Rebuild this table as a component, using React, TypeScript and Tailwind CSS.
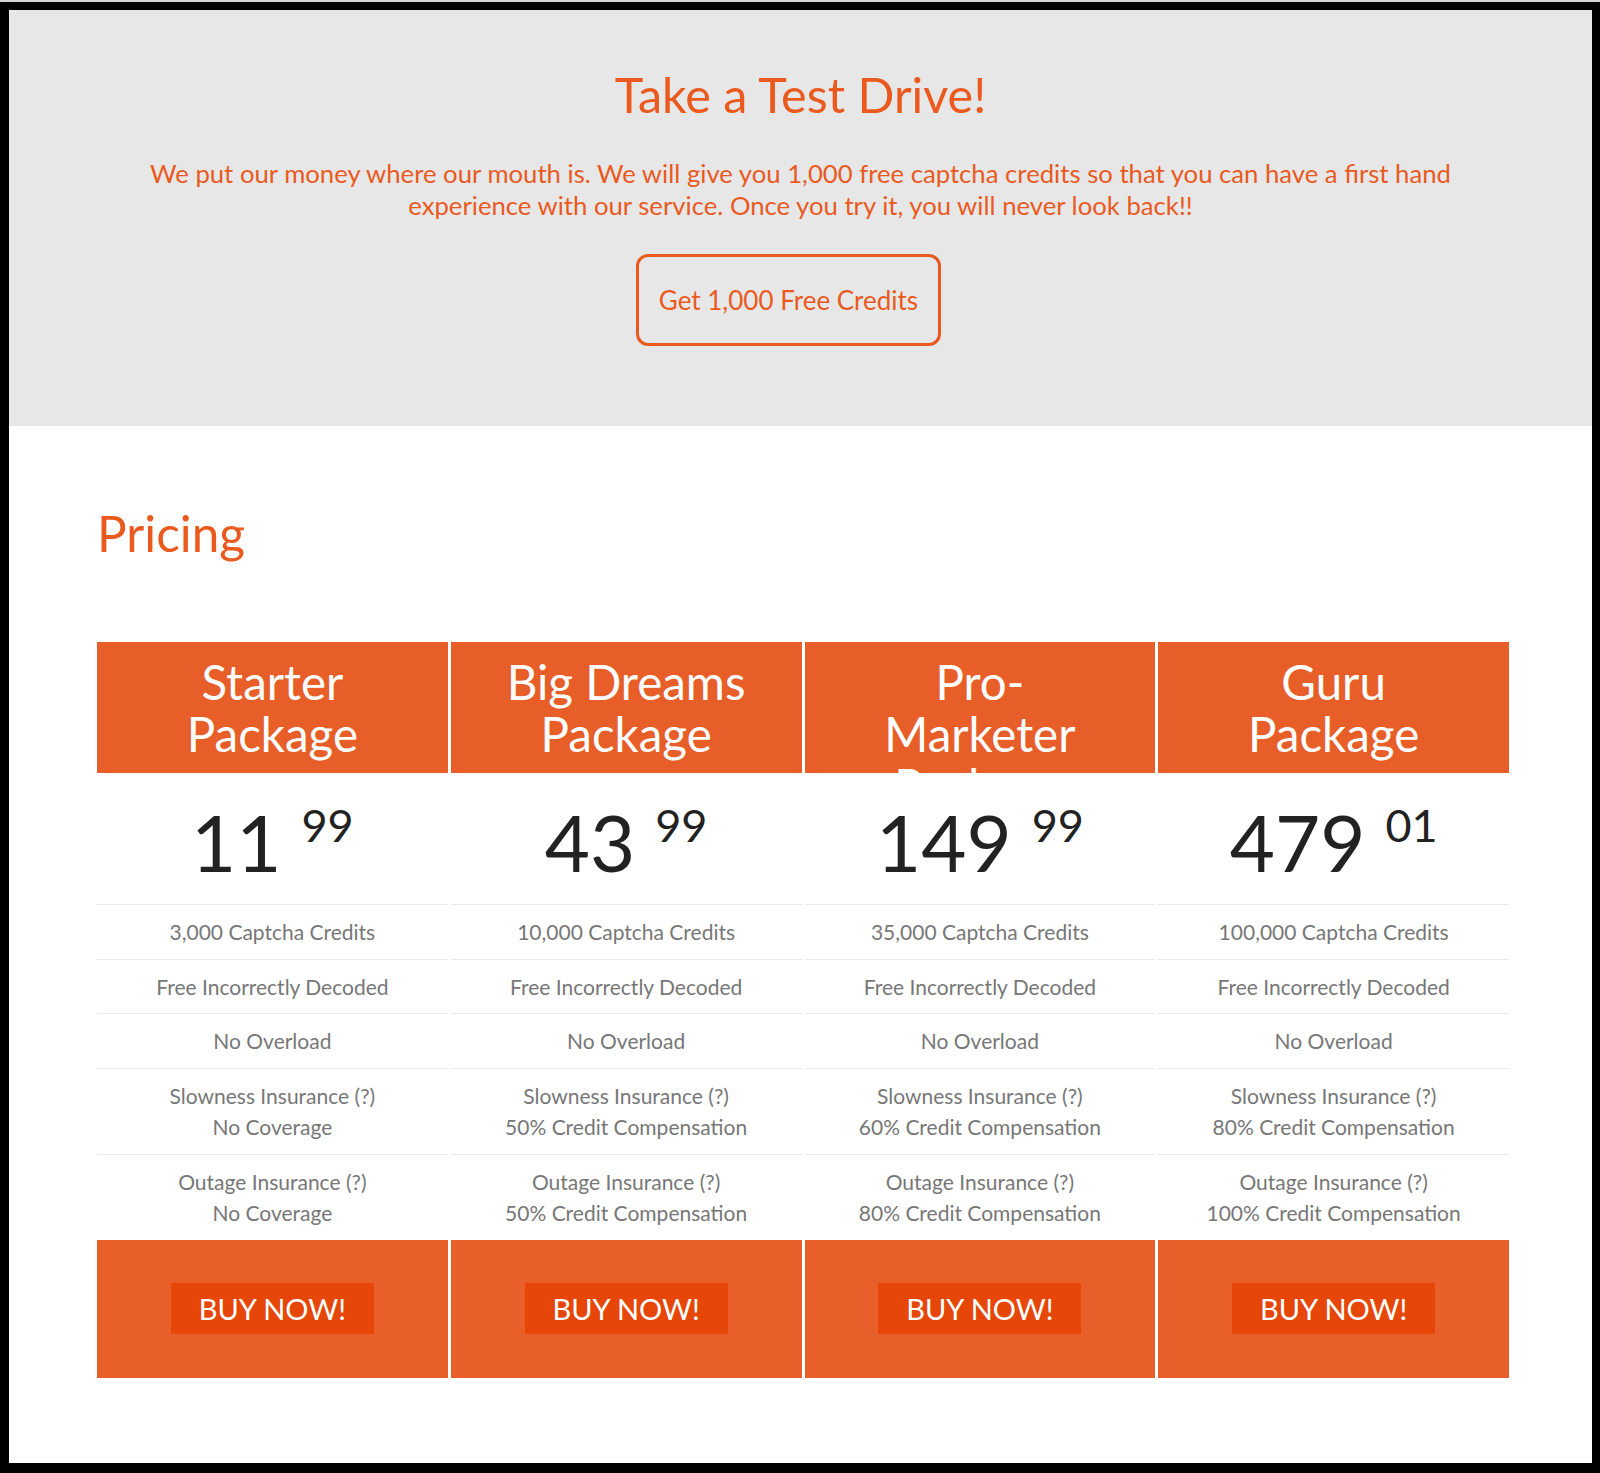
import React from 'react';

type Plan = {
    name: string;
    dollars: string;
    cents: string;
    credits: string;
    slowness: string;
    outage: string;
};

const plans: Plan[] = [
    { name: 'Starter Package', dollars: '11', cents: '99', credits: '3,000 Captcha Credits', slowness: 'No Coverage', outage: 'No Coverage' },
    { name: 'Big Dreams Package', dollars: '43', cents: '99', credits: '10,000 Captcha Credits', slowness: '50% Credit Compensation', outage: '50% Credit Compensation' },
    { name: 'Pro-Marketer Package', dollars: '149', cents: '99', credits: '35,000 Captcha Credits', slowness: '60% Credit Compensation', outage: '80% Credit Compensation' },
    { name: 'Guru Package', dollars: '479', cents: '01', credits: '100,000 Captcha Credits', slowness: '80% Credit Compensation', outage: '100% Credit Compensation' },
];

const Row = ({ children }: { children: React.ReactNode }) => (
    <div className="border-t border-[#e9e9e9] py-[11px] text-center text-[21px] leading-[31.5px] text-[#777777]">
        {children}
    </div>
);

const PlanColumn = ({ plan }: { plan: Plan }) => (
    <div className="flex flex-col">
        <div className="h-[131px] overflow-hidden bg-[#e85e28] px-[40px] pt-[14px] text-center text-[47.5px] leading-[52px] text-white">
            {plan.name}
        </div>

        <div className="h-[131px] pt-[29px] text-center text-[#222222]">
            <span className="text-[78px] leading-[80px]">{plan.dollars} </span>
            <span className="align-[30px] text-[45px] leading-none">{plan.cents}</span>
        </div>

        <Row>{plan.credits}</Row>
        <Row>Free Incorrectly Decoded</Row>
        <Row>No Overload</Row>
        <Row>
            Slowness Insurance (?)
            <br />
            {plan.slowness}
        </Row>
        <Row>
            Outage Insurance (?)
            <br />
            {plan.outage}
        </Row>

        <div className="flex h-[138px] items-center justify-center bg-[#e85f2a]">
            <button className="h-[51px] w-[203px] bg-[#e64607] text-[29px] text-white">
                BUY NOW!
            </button>
        </div>
    </div>
);

export default function App() {
    return (
        <div className="h-[1473px] bg-[#d4d4d4] pt-[2px] font-['Lato',sans-serif]">
            <div className="h-[1471px] border-b-[10px] border-l-[9px] border-r-[8px] border-t-[8px] border-black bg-white">
                <section className="flex h-[416px] flex-col items-center bg-[#e7e7e7] pt-[55px]">
                    <h1 className="text-[48.5px] leading-[58px] text-[#ea5a1f]">Take a Test Drive!</h1>
                    <p className="mt-[34px] max-w-[1360px] text-center text-[25.7px] leading-[32px] text-[#ea5a1f]">
                        We put our money where our mouth is. We will give you 1,000 free captcha credits so that you can have a first hand experience with our service. Once you try it, you will never look back!!
                    </p>
                    <button className="mr-[24px] mt-[33px] h-[92px] w-[305px] rounded-[12px] border-[3px] border-[#ea5a1f] text-[26px] text-[#ea5a1f]">
                        Get 1,000 Free Credits
                    </button>
                </section>

                <section className="ml-[88px] w-[1412px] pt-[78px]">
                    <h2 className="text-[49.5px] leading-[58px] text-[#ea5a1f]">Pricing</h2>
                    <div className="mt-[80px] grid grid-cols-4 gap-[3px]">
                        {plans.map((plan) => (
                            <PlanColumn key={plan.name} plan={plan} />
                        ))}
                    </div>
                </section>
            </div>
        </div>
    );
}
